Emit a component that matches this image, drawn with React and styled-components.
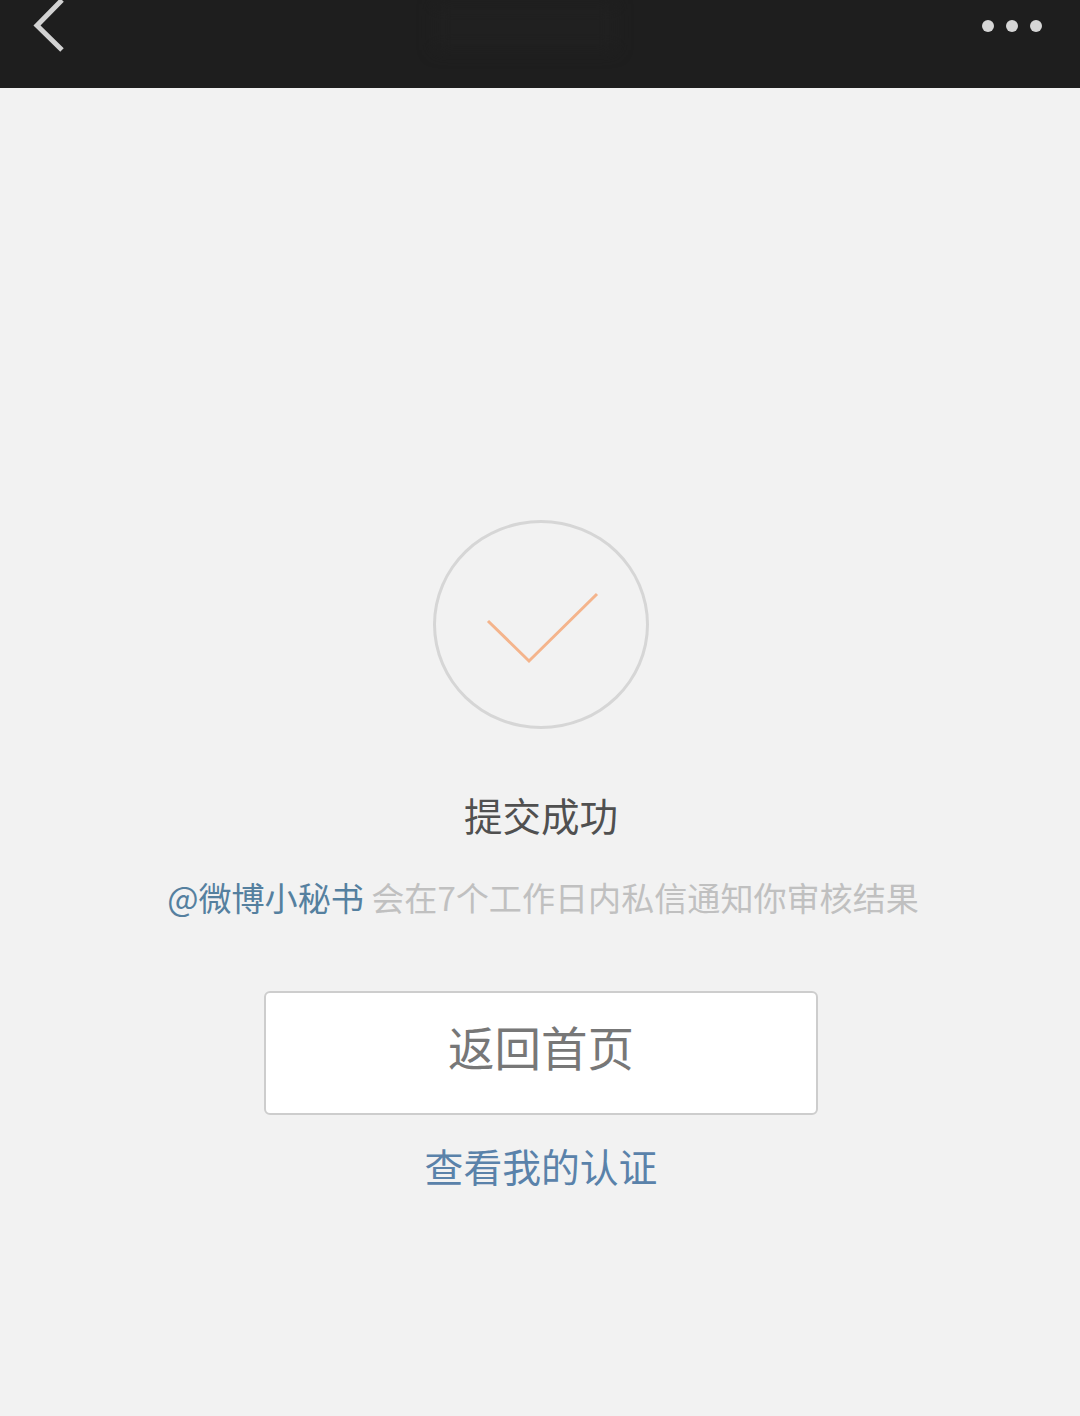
import React from "react";
import styled, { createGlobalStyle } from "styled-components";

const GlobalStyle = createGlobalStyle`
  html, body {
    margin: 0;
    padding: 0;
    background-color: #f2f2f2;
  }
  body {
    font-family: "Noto Sans CJK SC", "Liberation Sans", sans-serif;
  }
`;

const Page = styled.div`
  width: 1080px;
  height: 1416px;
  overflow: hidden;
  background-color: #f2f2f2;
`;

const TopBar = styled.header`
  height: 88px;
  background-color: #1e1e1e;
  display: flex;
  justify-content: space-between;
  align-items: flex-start;
  padding: 0 38px 0 32px;
`;

const BackIcon = styled.svg`
  display: block;
  width: 36px;
  height: 54px;
`;

const BlurredTitle = styled.div`
  width: 180px;
  height: 46px;
  margin-top: 4px;
  background-color: #202020;
  filter: blur(8px);
`;

const MoreDots = styled.div`
  display: flex;
  gap: 12px;
  padding-top: 20px;
`;

const Dot = styled.span`
  width: 12px;
  height: 12px;
  border-radius: 50%;
  background-color: #d6d6d6;
`;

const Content = styled.main`
  display: flex;
  flex-direction: column;
  align-items: center;
  padding: 432px 0 0 2px;
`;

const CheckCircle = styled.div`
  box-sizing: border-box;
  width: 216px;
  height: 209px;
  border: 3px solid #d6d6d6;
  border-radius: 50%;
`;

const CheckIcon = styled.svg`
  display: block;
  width: 216px;
  height: 209px;
  margin: -3px;
`;

const Title = styled.h1`
  margin: 60px 0 0;
  font-size: 38.5px;
  line-height: 50px;
  font-weight: 400;
  color: #505050;
`;

const Notice = styled.p`
  margin: 34px 0 0 4px;
  font-size: 33.1px;
  line-height: 48px;
  color: #c0c0c0;
  white-space: nowrap;
`;

const Mention = styled.span`
  color: #55809f;
`;

const HomeButton = styled.button`
  box-sizing: border-box;
  width: 554px;
  height: 124px;
  margin-top: 70px;
  padding: 0 0 16px;
  background-color: #fff;
  border: 2px solid #cdcdcd;
  border-radius: 6px;
  font-family: inherit;
  font-size: 46.500px;
  color: #777;
`;

const CertLink = styled.a`
  margin-top: 21px;
  font-size: 38.8px;
  line-height: 58px;
  color: #5a82aa;
`;

export default function App() {
  return (
    <Page>
      <GlobalStyle />
      <TopBar>
        <BackIcon viewBox="0 0 36 54">
          <path d="M30 0 L5 25.500 L30 50" fill="none" stroke="#d2d2d2" strokeWidth="5" />
        </BackIcon>
        <BlurredTitle />
        <MoreDots>
          <Dot />
          <Dot />
          <Dot />
        </MoreDots>
      </TopBar>
      <Content>
        <CheckCircle>
          <CheckIcon viewBox="0 0 216 209">
            <path d="M55 101 L96 141 L164 74" fill="none" stroke="#f4b48c" strokeWidth="3" />
          </CheckIcon>
        </CheckCircle>
        <Title>提交成功</Title>
        <Notice>
          <Mention>@微博小秘书</Mention> 会在7个工作日内私信通知你审核结果
        </Notice>
        <HomeButton>返回首页</HomeButton>
        <CertLink>查看我的认证</CertLink>
      </Content>
    </Page>
  );
}
